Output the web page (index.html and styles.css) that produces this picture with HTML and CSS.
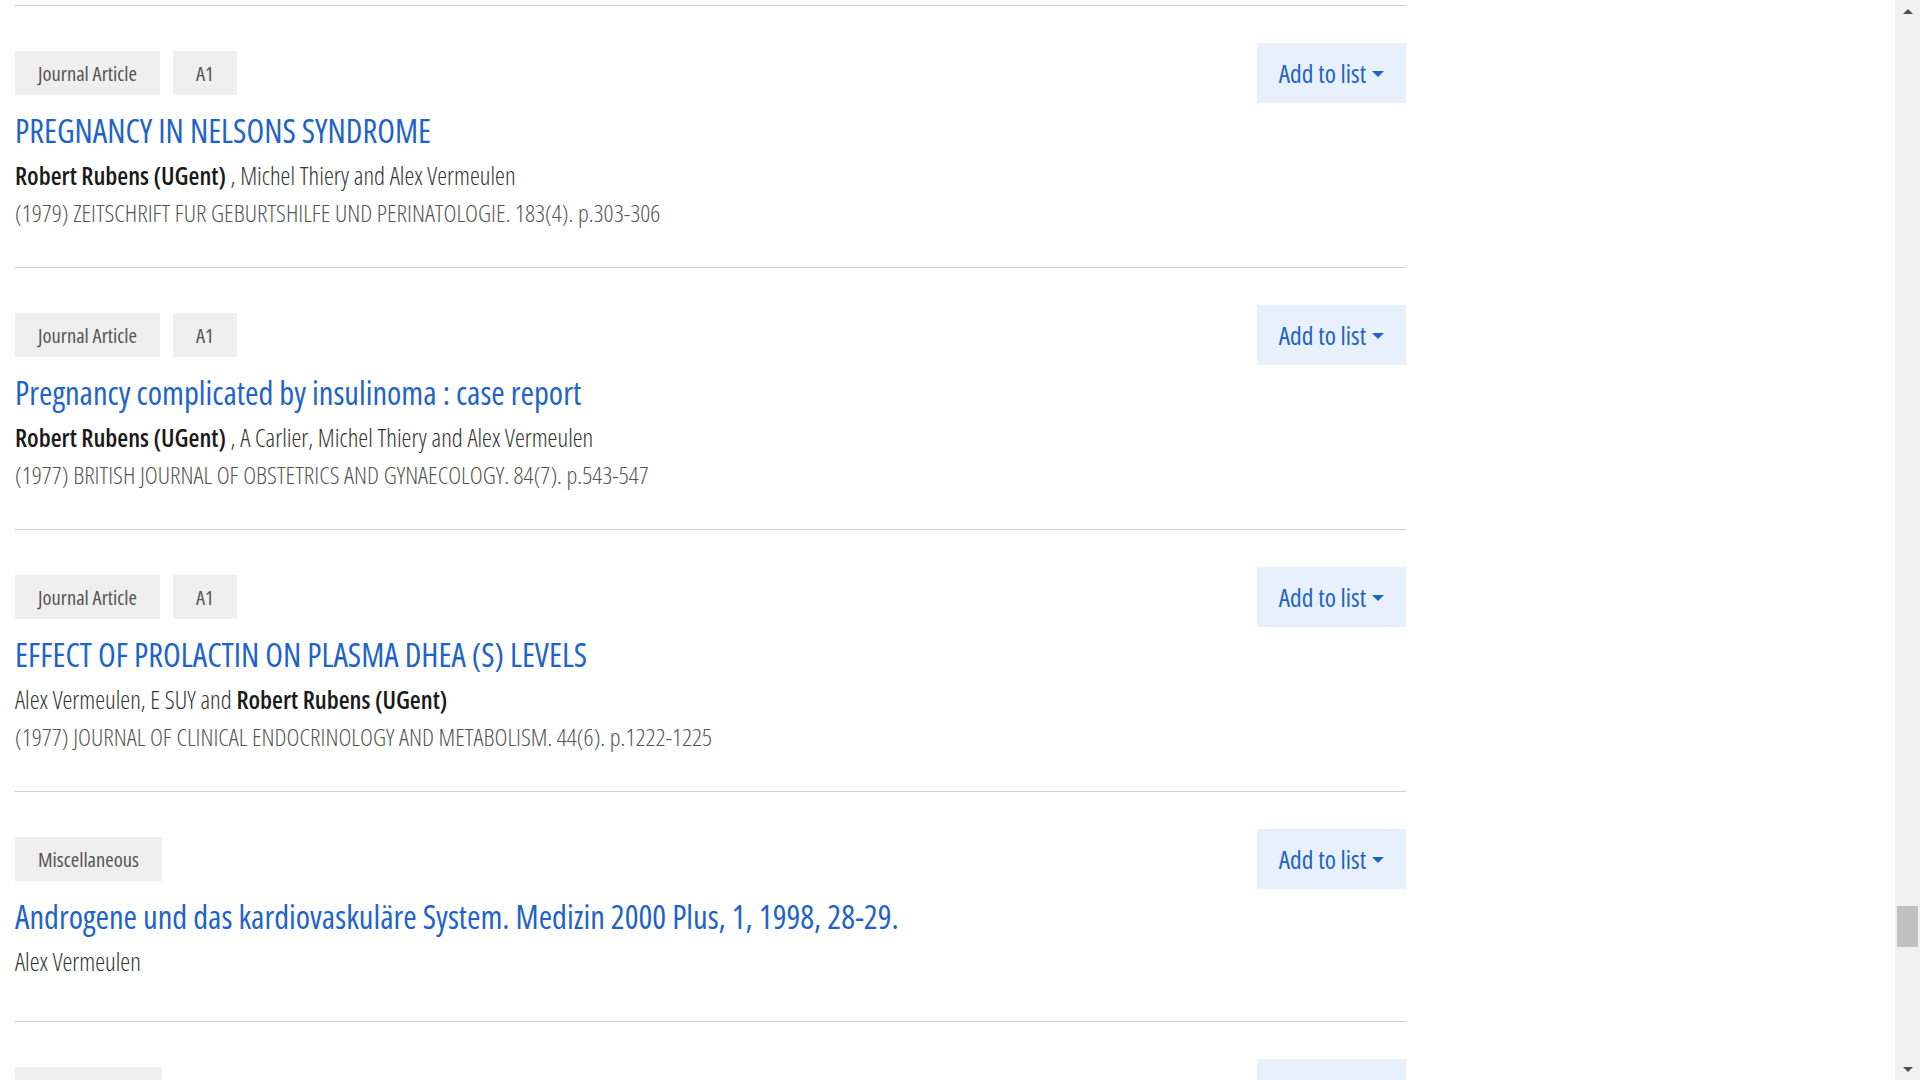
FILE: index.html
```html
<!DOCTYPE html>
<html lang="en">
<head>
  <meta charset="UTF-8" />
  <meta name="viewport" content="width=device-width, initial-scale=1.0"/>
  <title>Publications - Robert Rubens</title>
  <link rel="stylesheet" href="styles.css">
</head>
<body>
  <div class="window">
    <div class="viewport">
      <div class="results">

        <div class="item">
          <div class="item-head">
            <div class="tags">
              <span class="tag">Journal Article</span>
              <span class="tag">A1</span>
            </div>
            <button class="add-btn">Add to list <span class="caret"></span></button>
          </div>
          <a class="title" href="#">PREGNANCY IN NELSONS SYNDROME</a>
          <div class="authors"><b>Robert Rubens (UGent)</b> , Michel Thiery and Alex Vermeulen</div>
          <div class="source">(1979) ZEITSCHRIFT FUR GEBURTSHILFE UND PERINATOLOGIE. 183(4). p.303-306</div>
        </div>

        <div class="item">
          <div class="item-head">
            <div class="tags">
              <span class="tag">Journal Article</span>
              <span class="tag">A1</span>
            </div>
            <button class="add-btn">Add to list <span class="caret"></span></button>
          </div>
          <a class="title" href="#">Pregnancy complicated by insulinoma : case report</a>
          <div class="authors"><b>Robert Rubens (UGent)</b> , A Carlier, Michel Thiery and Alex Vermeulen</div>
          <div class="source">(1977) BRITISH JOURNAL OF OBSTETRICS AND GYNAECOLOGY. 84(7). p.543-547</div>
        </div>

        <div class="item">
          <div class="item-head">
            <div class="tags">
              <span class="tag">Journal Article</span>
              <span class="tag">A1</span>
            </div>
            <button class="add-btn">Add to list <span class="caret"></span></button>
          </div>
          <a class="title" href="#">EFFECT OF PROLACTIN ON PLASMA DHEA (S) LEVELS</a>
          <div class="authors">Alex Vermeulen, E SUY and <b>Robert Rubens (UGent)</b></div>
          <div class="source">(1977) JOURNAL OF CLINICAL ENDOCRINOLOGY AND METABOLISM. 44(6). p.1222-1225</div>
        </div>

        <div class="item">
          <div class="item-head">
            <div class="tags">
              <span class="tag">Miscellaneous</span>
            </div>
            <button class="add-btn">Add to list <span class="caret"></span></button>
          </div>
          <a class="title" href="#">Androgene und das kardiovaskuläre System. Medizin 2000 Plus, 1, 1998, 28-29.</a>
          <div class="authors">Alex Vermeulen</div>
        </div>

        <div class="item">
          <div class="item-head">
            <div class="tags">
              <span class="tag">Miscellaneous</span>
            </div>
            <button class="add-btn">Add to list <span class="caret"></span></button>
          </div>
        </div>

      </div>
    </div>

    <div class="scrollbar">
      <div class="sb-arrow sb-up"></div>
      <div class="sb-track"><div class="sb-thumb"></div></div>
      <div class="sb-arrow sb-down"></div>
    </div>
  </div>
</body>
</html>
```
FILE: styles.css
```css
html, body {
  margin: 0;
  height: 100%;
  background: #fff;
}
body {
  font-family: "Open Sans", Roboto, sans-serif;
  font-stretch: 75%;
  color: #333;
}
.window {
  display: flex;
  height: 100vh;
  overflow: hidden;
}
.viewport {
  flex: 1;
  overflow: hidden;
}
.results {
  width: 1391px;
  margin: 5px 0 0 15px;
  border-top: 1px solid #cfcfcf;
}
.item {
  padding: 37px 0 38px;
  border-bottom: 1px solid #cfcfcf;
}
.item-head {
  display: flex;
  justify-content: space-between;
  align-items: flex-start;
}
.tags {
  display: flex;
  gap: 13px;
  margin-top: 8px;
}
.tag {
  display: block;
  height: 44px;
  line-height: 44px;
  padding: 0 23px;
  background: #efefef;
  color: #555;
  font-size: 20.5px;
}
.add-btn {
  display: flex;
  align-items: center;
  justify-content: center;
  gap: 6px;
  width: 149px;
  height: 60px;
  padding: 0;
  border: none;
  background: #e8f0fb;
  color: #1e64c8;
  font-family: inherit;
  font-stretch: 75%;
  font-size: 25.5px;
  white-space: nowrap;
  cursor: pointer;
}
.caret {
  width: 0;
  height: 0;
  border-left: 6px solid transparent;
  border-right: 6px solid transparent;
  border-top: 6px solid #1e64c8;
  margin-top: 2px;
}
.title {
  display: block;
  margin-top: 10px;
  line-height: 36px;
  font-size: 32.5px;
  color: #1e64c8;
  text-decoration: none;
}
.authors {
  margin-top: 8px;
  margin-bottom: 4px;
  line-height: 36px;
  font-size: 25px;
  font-weight: 300;
  color: #333;
}
.authors b {
  font-weight: 600;
  color: #1a1a1a;
}
.source {
  line-height: 32px;
  font-size: 24.6px;
  font-weight: 300;
  color: #555;
}

/* fake window scrollbar */
.scrollbar {
  width: 25px;
  display: flex;
  flex-direction: column;
  background: #f1f1f1;
}
.sb-arrow {
  height: 22px;
  display: flex;
  align-items: center;
  justify-content: center;
}
.sb-up::before,
.sb-down::before {
  content: "";
  border-left: 5px solid transparent;
  border-right: 5px solid transparent;
}
.sb-up::before {
  border-bottom: 5px solid #505050;
}
.sb-down::before {
  border-top: 5px solid #505050;
}
.sb-track {
  flex: 1;
}
.sb-thumb {
  margin: 884px 2px 0;
  height: 41px;
  background: #c1c1c1;
}
```
